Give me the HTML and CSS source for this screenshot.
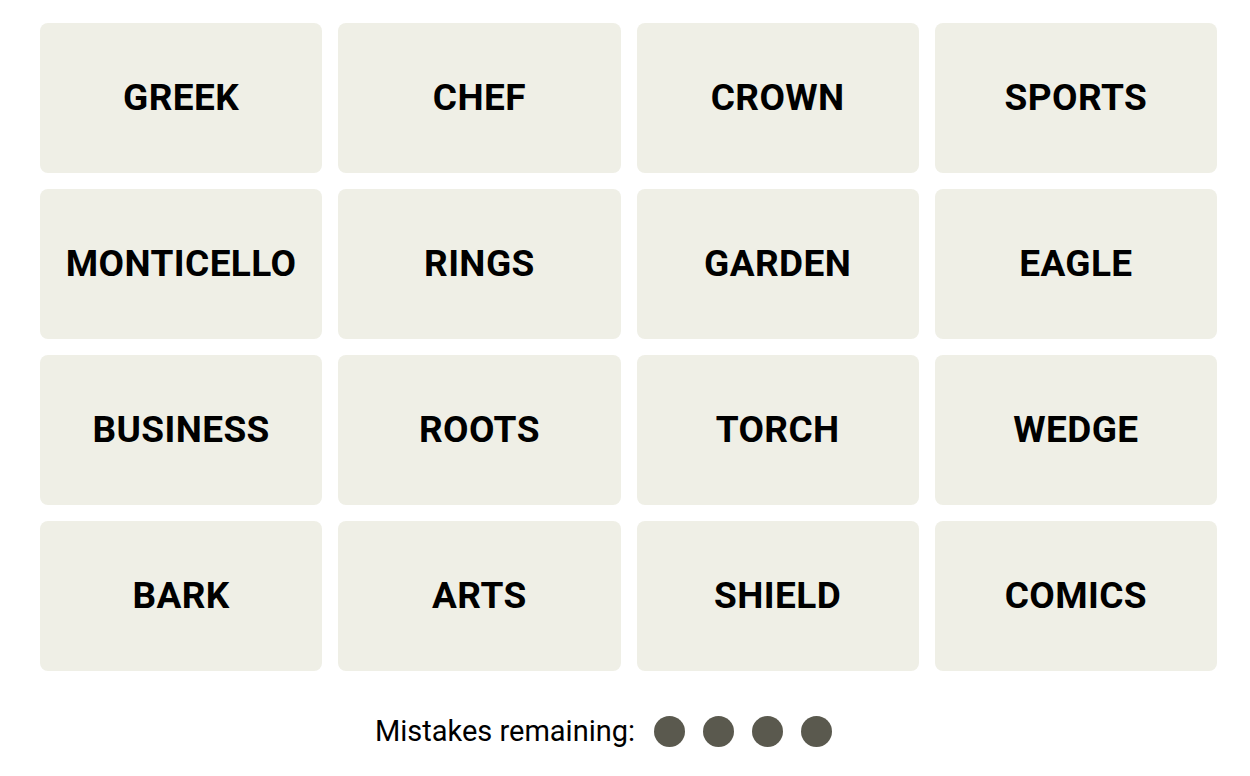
FILE: index.html
```html
<!DOCTYPE html>
<html lang="en">
<head>
    <meta charset="UTF-8">
    <title>Connections</title>
    <link rel="stylesheet" href="styles.css">
</head>
<body>
    <div class="board">
        <div class="grid">
            <div class="tile">GREEK</div>
            <div class="tile">CHEF</div>
            <div class="tile">CROWN</div>
            <div class="tile">SPORTS</div>
            <div class="tile">MONTICELLO</div>
            <div class="tile">RINGS</div>
            <div class="tile">GARDEN</div>
            <div class="tile">EAGLE</div>
            <div class="tile">BUSINESS</div>
            <div class="tile">ROOTS</div>
            <div class="tile">TORCH</div>
            <div class="tile">WEDGE</div>
            <div class="tile">BARK</div>
            <div class="tile">ARTS</div>
            <div class="tile">SHIELD</div>
            <div class="tile">COMICS</div>
        </div>

        <div class="mistakes">
            <span class="mistakes-label">Mistakes remaining:</span>
            <span class="dots">
                <span class="dot"></span>
                <span class="dot"></span>
                <span class="dot"></span>
                <span class="dot"></span>
            </span>
        </div>
    </div>
</body>
</html>
```

FILE: styles.css
```css
/* General */
body {
    margin: 0;
    background: #ffffff;
    color: #000;
    font-family: Roboto, "Liberation Sans", sans-serif;
}

.board {
    padding: 23px 33px 0 40px;
}

/* Word grid */
.grid {
    display: grid;
    grid-template-columns: repeat(4, 1fr);
    grid-auto-rows: 150px;
    gap: 16px;
}

.tile {
    display: flex;
    align-items: center;
    justify-content: center;
    padding-bottom: 2px;
    background: #efefe6;
    border-radius: 8px;
    font-size: 37px;
    font-weight: 700;
    letter-spacing: 0.4px;
}

/* Mistakes row */
.mistakes {
    display: flex;
    align-items: center;
    justify-content: center;
    height: 120px;
    padding-right: 50px;
}

.mistakes-label {
    font-size: 29px;
    margin-right: 19px;
}

.dots {
    display: flex;
    gap: 18px;
}

.dot {
    width: 31px;
    height: 31px;
    border-radius: 50%;
    background: #5a594e;
}
```
